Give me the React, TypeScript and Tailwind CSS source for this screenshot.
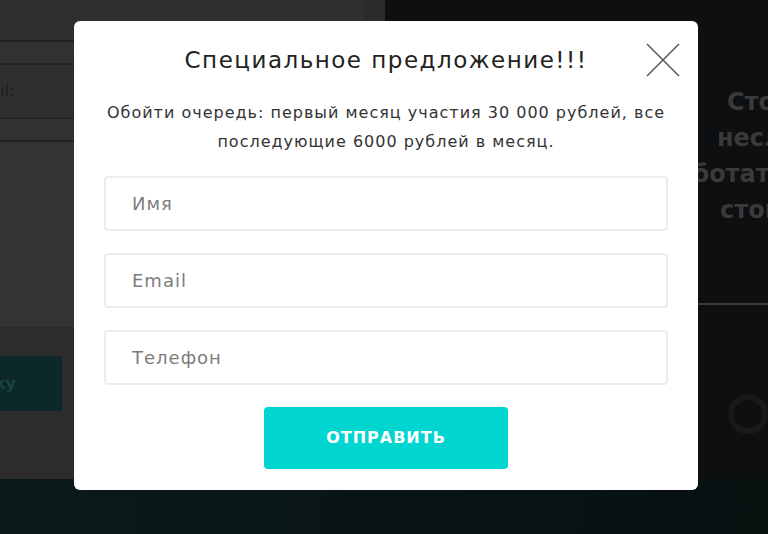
const font = { fontFamily: '"DejaVu Sans", "Open Sans", sans-serif' };

const Field = ({ placeholder }: { placeholder: string }) => (
  <input
    type="text"
    placeholder={placeholder}
    className="h-[55px] w-full rounded-[4px] border-2 border-[#ececec] bg-white px-[26px] text-[18px] tracking-[1px] text-[#333] outline-none placeholder:text-[#7d7d7d]"
  />
);

export default function App() {
  return (
    <div className="relative flex h-[534px] w-[768px] flex-col overflow-hidden bg-[#0a1515]" style={font}>
      {/* затемнённая страница */}
      <div className="flex h-[479px]">
        <div className="flex w-[365px] shrink-0 flex-col bg-[#2f2f2f]">
          <div className="h-[40px]" />
          <div className="h-[2px] bg-[#232323]" />
          <div className="h-[21px] bg-[#313131]" />
          <div className="h-[2px] bg-[#232323]" />
          <div className="flex h-[52px] items-center text-[16px] text-[#1e1e1e]">il:</div>
          <div className="h-[2px] bg-[#232323]" />
          <div className="h-[21px] bg-[#313131]" />
          <div className="h-[2px] bg-[#232323]" />
          <div className="h-[185px] bg-[#333333]" />
          <div className="flex flex-1 flex-col bg-[#2c2c2c] pt-[29px]">
            <div className="flex h-[55px] w-[62px] items-center justify-end rounded-r-[3px] bg-[#0c2828] pr-[46px] text-[16px] font-bold text-[#1a4444]">
              ку
            </div>
          </div>
        </div>
        <div className="w-[20px] shrink-0 border-l border-[#262626] bg-[#2b2b2b]" />
        <div className="flex min-w-0 flex-1 flex-col overflow-hidden bg-[#0d0f11]">
          <div className="h-[84px]" />
          <div className="flex flex-col whitespace-nowrap text-[24px] font-bold leading-[36px] text-[#3a3a3a]">
            <div className="pl-[342px]">Стоимость</div>
            <div className="pl-[332px]">несложных</div>
            <div className="pl-[274px]">работать</div>
            <div className="pl-[335px]">стоит</div>
          </div>
          <div className="h-[75px]" />
          <div className="h-[2px] bg-[#3a3c3e]" />
          <div className="flex flex-1 items-end justify-end pb-[45px]">
            <div className="h-[40px] w-[40px] rounded-full border-[6px] border-[#17191b]" />
          </div>
        </div>
      </div>
      <div className="flex-1 bg-gradient-to-r from-[#0b1a1a] to-[#081010]" />

      {/* всплывающее окно */}
      <div className="absolute left-[74px] top-[21px] flex h-[469px] w-[624px] flex-col items-center rounded-[6px] bg-white px-[30px] pt-[24px]">
        <button className="absolute right-[18px] top-[22px] text-[#555]">
          <svg width="34" height="34" viewBox="0 0 34 34" fill="none" stroke="currentColor" strokeWidth="1.5">
            <path d="M1 1 L33 33 M33 1 L1 33" />
          </svg>
        </button>
        <h2 className="whitespace-nowrap text-[23px] font-normal leading-[30px] tracking-[1.5px] text-[#222]">
          Специальное предложение!!!
        </h2>
        <p className="mt-[23px] whitespace-nowrap text-center text-[16px] leading-[29px] tracking-[1px] text-[#333]">
          Обойти очередь: первый месяц участия 30 000 рублей, все
          <br />
          последующие 6000 рублей в месяц.
        </p>
        <div className="mt-[20px] flex w-full flex-col gap-[22px]">
          <Field placeholder="Имя" />
          <Field placeholder="Email" />
          <Field placeholder="Телефон" />
        </div>
        <button className="mt-[22px] h-[62px] w-[244px] rounded-[4px] bg-[#00d6cf] text-[16px] font-bold uppercase tracking-[1px] text-white">
          Отправить
        </button>
      </div>
    </div>
  );
}
